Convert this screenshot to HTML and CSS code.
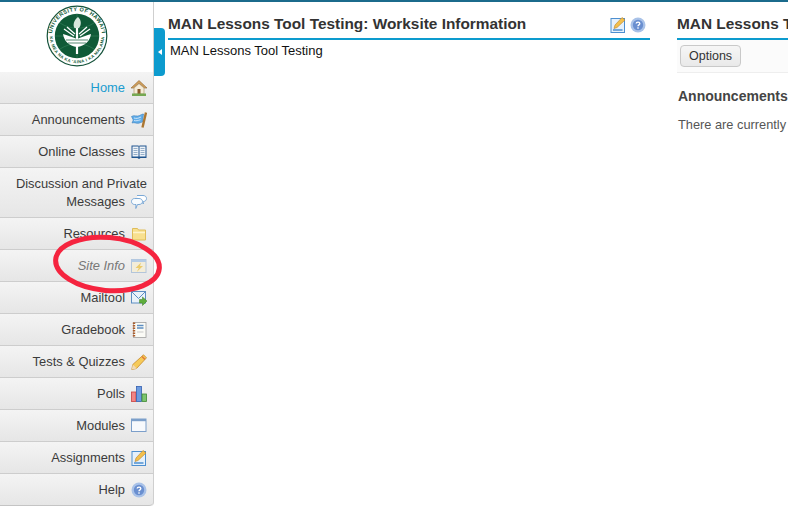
FILE: index.html
```html
<!DOCTYPE html>
<html lang="en">
<head>
<meta charset="utf-8">
<title>MAN Lessons Tool Testing</title>
<link rel="stylesheet" href="styles.css">
</head>
<body>
<div class="page">
  <aside class="sidebar">
    <div class="logo">
      <svg width="62" height="62" viewBox="0 0 62 62">
        <defs>
          <path id="arcTop" d="M6 31a25 25 0 0 1 50 0"/>
          <path id="arcBot" d="M3.800 31a27.200 27.200 0 0 0 54.400 0"/>
        </defs>
        <circle cx="31" cy="31" r="29.800" fill="#fff" stroke="#14523a" stroke-width="1.200"/>
        <circle cx="31" cy="31" r="22.200" fill="#0f5a37"/>
        <text class="seal-text"><textPath href="#arcTop" startOffset="50%" text-anchor="middle">UNIVERSITY OF HAWAI'I</textPath></text>
        <text class="seal-text seal-small"><textPath href="#arcBot" startOffset="50%" text-anchor="middle">KA MEA NA KA 'AINA I KA MALAMA</textPath></text>
        <path d="M9 31h44M31 9v44M14 18c11 7 23 7 34 0M14 44c11-7 23-7 34 0" fill="none" stroke="#3d8a62" stroke-width=".5"/>
        <path d="M17 29c4 1 9 3 14 5 5-2 10-4 14-5-1 7-6 12-14 13-8-1-13-6-14-13z" fill="#fff"/>
        <path d="M31 22v27" stroke="#fff" stroke-width="2.200"/>
        <path d="M32 12c3.500 3 3.500 8 1 11h-4.500c-2-3-.5-8 3.500-11z" fill="#d8e8dd"/>
        <path d="M18 24l10 7M44 24l-10 7M21 22l8 7M41 22l-8 7" stroke="#fff" stroke-width="1.300"/>
        <path d="M20 35h22M22 38h18" stroke="#0f5a37" stroke-width=".7"/>
      </svg>
    </div>
    <nav class="menu">
      <a class="item current">Home<svg class="ico" viewBox="0 0 16 16"><path d="M8 .5L0 8h2.500L8 3.200 13.500 8H16z" fill="#d1a05c" stroke="#8f6531" stroke-width=".6"/><path d="M3 8l5-4.300L13 8v6H3z" fill="#f5ecd8" stroke="#a98a5c" stroke-width=".6"/><rect x="6.500" y="9" width="3" height="5" fill="#8a5a2b"/><path d="M1 13.500h14V16H1z" fill="#75a852"/></svg></a>
      <a class="item">Announcements<svg class="ico" viewBox="0 0 16 16"><path d="M.5 4.500C3 2.500 6 5 8.500 3.500c1.500-.8 3-1.500 4-1.500l-1 8c-2 .3-3.500 1.800-6 1.200-1.500-.4-3-.7-4.500-.2l1.300-3z" fill="#62ade8" stroke="#3a7fbd" stroke-width=".6"/><path d="M3 6c2 .8 4 .5 7-1M3 8.500c2 .5 4 .2 6.500-.8" stroke="#d4e9fa" stroke-width=".9" fill="none"/><path d="M15 .5L11.500 15.500" stroke="#ab7632" stroke-width="2.400"/></svg></a>
      <a class="item">Online Classes<svg class="ico" viewBox="0 0 16 16"><path d="M.5 1.500h7l.5 1 .5-1h7v12.500h-6l-1.500 1-1.500-1h-6z" fill="#20558f"/><path d="M1.500 2.500h6v10h-6zM8.500 2.500h6v10h-6z" fill="#eef3f8"/><path d="M2.500 4.500h4M2.500 6.500h4M2.500 8.500h4M2.500 10.500h4M9.500 4.500h4M9.500 6.500h4M9.500 8.500h4M9.500 10.500h4" stroke="#7f9dbd" stroke-width=".8"/></svg></a>
      <a class="item tall"><span class="tall-label">Discussion and Private Messages<svg class="ico" viewBox="0 0 16 16"><path d="M6 1.500h6c2 0 3.500 1.200 3.500 3s-1.500 3-3 3h-.5l.5 2.500L10 7.500H7" fill="#fff" stroke="#7aa8d6"/><path d="M3.500 4.500h4.500c2 0 3.500 1.300 3.500 3s-1.500 3-3.500 3H6.500L4.800 14.500l.2-4H3.500C1.800 10.500.5 9.200.5 7.500s1.300-3 3-3z" fill="#f7fbfe" stroke="#7aa8d6"/></svg></span></a>
      <a class="item">Resources<svg class="ico" viewBox="0 0 16 16"><path d="M1.500 2.500h5l1 1.500h7v10h-13z" fill="#f8e08f" stroke="#dfbd5a"/><path d="M2 6.500h12" stroke="#fff4cc" stroke-width="1.500"/></svg></a>
      <a class="item muted">Site Info<svg class="ico" viewBox="0 0 16 16"><rect x=".5" y="1.500" width="14.500" height="13" fill="#f3edd9" stroke="#b3c5da"/><rect x=".5" y="1.500" width="14.500" height="2.500" fill="#b3cbe6"/><path d="M10 4.500L4.500 10h3.300l-2 4L12 8H9z" fill="#ebcb6c"/></svg></a>
      <a class="item">Mailtool<svg class="ico" viewBox="0 0 16 16"><rect x=".5" y="1.500" width="14" height="11.500" fill="#eaf2fa" stroke="#5d8ec2"/><path d="M.5 1.500L7.500 8.500l7-7" fill="none" stroke="#5d8ec2"/><path d="M8.500 9.500h3V7l4.500 4-4.500 4.500V13h-3z" fill="#5fae3c" stroke="#3f7f25" stroke-width=".5"/></svg></a>
      <a class="item">Gradebook<svg class="ico" viewBox="0 0 16 16"><rect x="2.500" y=".5" width="12.500" height="15" fill="#fbfbf6" stroke="#a0a0a0" stroke-width=".8"/><path d="M3 .5v15" stroke="#ad5f2e" stroke-width="2.400" stroke-dasharray="1.500 1"/><path d="M6 3.500h6.500M6 6h6.500" stroke="#5d8ec2" stroke-width="1.400"/><path d="M6 10h6.500" stroke="#c9c9c9"/></svg></a>
      <a class="item">Tests &amp; Quizzes<svg class="ico" viewBox="0 0 16 16"><path d="M.8 15.500l1-5L12.500.8l3 3L5.500 14.500z" fill="#f6ca58" stroke="#c68a2a" stroke-width=".8"/><path d="M.8 15.500l1-5 4 4z" fill="#f0d9b5"/><path d="M11 2.500l3 3" stroke="#e07a3a" stroke-width="1.500"/></svg></a>
      <a class="item">Polls<svg class="ico" viewBox="0 0 16 16"><rect x=".5" y="6" width="4.500" height="9.500" fill="#f28585" stroke="#c84040" stroke-width=".8"/><rect x="5.500" y=".5" width="5" height="15" fill="#6d9be0" stroke="#345fb0" stroke-width=".8"/><rect x="11" y="8" width="4.500" height="7.500" fill="#7cc46e" stroke="#3f8a34" stroke-width=".8"/></svg></a>
      <a class="item">Modules<svg class="ico" viewBox="0 0 16 16"><rect x=".5" y="1" width="14.500" height="12.500" fill="#f7f9fc" stroke="#7c9fca"/><rect x=".5" y="1" width="14.500" height="2.200" fill="#7c9fca"/></svg></a>
      <a class="item">Assignments<svg class="ico" viewBox="0 0 16 16"><use href="#edit"/></svg></a>
      <a class="item">Help<svg class="ico" viewBox="0 0 16 16"><use href="#help"/></svg></a>
    </nav>
  </aside>

  <main class="content">
    <section class="tool tool-info">
      <header class="tool-head">
        <h2>MAN Lessons Tool Testing: Worksite Information</h2>
        <div class="tool-icons">
          <svg class="ico" viewBox="0 0 16 16">
            <symbol id="edit" viewBox="0 0 16 16"><rect x="1" y="1.500" width="13.500" height="14" fill="#e6f1fb" stroke="#4d8fd0"/><path d="M3 13h9.500" stroke="#4d8fd0" stroke-width="1.500"/><path d="M4 11.500l1-3.500 7-7.500L15 3l-8 7.500z" fill="#f3c04c" stroke="#b9822a" stroke-width=".6"/></symbol>
            <use href="#edit"/>
          </svg>
          <svg class="ico" viewBox="0 0 16 16">
            <symbol id="help" viewBox="0 0 16 16"><circle cx="8" cy="8" r="7.500" fill="#a9c2e8"/><circle cx="8" cy="8" r="5.200" fill="#6a8fd0"/><path d="M6.200 6.500C6.300 4.700 9.800 4.700 9.800 6.500 9.800 8 8 7.800 8 9.300" fill="none" stroke="#fff" stroke-width="1.400"/><rect x="7.300" y="10.300" width="1.400" height="1.400" fill="#fff"/></symbol>
            <use href="#help"/>
          </svg>
        </div>
      </header>
      <p class="info-text">MAN Lessons Tool Testing</p>
    </section>
    <section class="tool tool-ann">
      <header class="tool-head"><h2>MAN Lessons Tool Testing: Announcements</h2></header>
      <div class="toolbar"><button class="btn" type="button">Options</button></div>
      <h3>Announcements</h3>
      <p class="ann-text">There are currently no announcements at this location.</p>
    </section>
  </main>

  <div class="collapse-tab"><span class="arrow"></span></div>
  <svg class="highlight" width="120" height="84" viewBox="0 0 120 84"><ellipse cx="58.500" cy="40" rx="52" ry="26.500" transform="rotate(5 58.500 40)" fill="none" stroke="#f5243f" stroke-width="5"/></svg>
</div>
</body>
</html>
```

FILE: styles.css
```css
html, body {
  margin: 0;
  padding: 0;
  height: 100%;
  overflow: hidden;
  background: #fff;
}

.page {
  position: relative;
  display: flex;
  height: 521px;
  width: 788px;
  overflow: hidden;
  border-top: 2px solid #1b6b8c;
  box-sizing: border-box;
  font-family: "Liberation Sans", Arial, sans-serif;
  color: #333;
}

.sidebar {
  flex: 0 0 154px;
  width: 154px;
  box-sizing: border-box;
  border-right: 1px solid #cfcfcf;
  align-self: flex-start;
  border-bottom-right-radius: 4px;
}

.logo {
  height: 70px;
  display: flex;
  justify-content: center;
  align-items: flex-start;
}

.logo svg {
  margin-top: 3px;
}

.seal-text {
  font-family: "Liberation Sans", Arial, sans-serif;
  font-size: 5.500px;
  font-weight: 700;
  fill: #0f5a37;
  letter-spacing: .4px;
}

.seal-small {
  font-size: 4.200px;
}

.menu {
  display: flex;
  flex-direction: column;
}

.item {
  display: flex;
  justify-content: flex-end;
  align-items: center;
  gap: 6px;
  height: 32px;
  box-sizing: border-box;
  padding: 0 6px 0 8px;
  background: linear-gradient(#f4f4f4, #e6e6e6);
  border-bottom: 1px solid #cdcdcd;
  font-size: 12.900px;
  line-height: 18px;
  color: #3b3b3b;
  text-decoration: none;
  text-align: right;
}

.item:last-child {
  border-bottom: 1px solid #c4c4c4;
  border-bottom-right-radius: 4px;
}

.item.tall {
  height: 50px;
}

.tall-label {
  display: block;
}

.tall-label .ico {
  margin-left: 6px;
  vertical-align: -4px;
}

.item.current {
  color: #1a9cd0;
}

.item.muted {
  color: #777;
  font-style: italic;
}

.ico {
  width: 16px;
  height: 16px;
  flex: none;
}

.content {
  flex: 1 1 auto;
  min-width: 0;
  display: flex;
  gap: 27px;
  padding: 12px 0 0 14px;
}

.tool {
  flex: none;
}

.tool-info {
  width: 482px;
}

.tool-ann {
  width: 500px;
}

.tool-head {
  display: flex;
  justify-content: space-between;
  align-items: flex-start;
  height: 24px;
  border-bottom: 2px solid #0d9bce;
}

.tool-head h2 {
  margin: 0;
  font-size: 15.400px;
  line-height: 20px;
  font-weight: 700;
  color: #333;
  white-space: nowrap;
}

.tool-icons {
  display: flex;
  gap: 4px;
  padding: 3px 4px 0 0;
}

.info-text {
  margin: 2px 0 0 2px;
  font-size: 13px;
  line-height: 18px;
  color: #111;
}

.toolbar {
  display: flex;
  align-items: center;
  height: 32px;
  padding-left: 3px;
  background: #fbfbfb;
  border-bottom: 1px solid #eee;
}

.btn {
  height: 22px;
  padding: 0 8px;
  font: 12.500px/20px "Liberation Sans", Arial, sans-serif;
  color: #333;
  background: linear-gradient(#f6f6f6, #e9e9e9);
  border: 1px solid #c9c9c9;
  border-radius: 4px;
}

.tool-ann h3 {
  margin: 13px 0 0 1px;
  font-size: 14px;
  line-height: 20px;
  font-weight: 700;
  color: #444;
  white-space: nowrap;
}

.ann-text {
  margin: 10px 0 0 1px;
  font-size: 12.800px;
  line-height: 18px;
  color: #555;
  white-space: nowrap;
}

.collapse-tab {
  position: absolute;
  left: 154px;
  top: 26px;
  width: 11px;
  height: 48px;
  background: #0d9bce;
  border-radius: 0 4px 4px 0;
  display: flex;
  align-items: center;
  justify-content: center;
}

.arrow {
  width: 0;
  height: 0;
  border-style: solid;
  border-width: 3px 4px 3px 0;
  border-color: transparent #fff transparent transparent;
}

.highlight {
  position: absolute;
  left: 49px;
  top: 222px;
  pointer-events: none;
}
```
